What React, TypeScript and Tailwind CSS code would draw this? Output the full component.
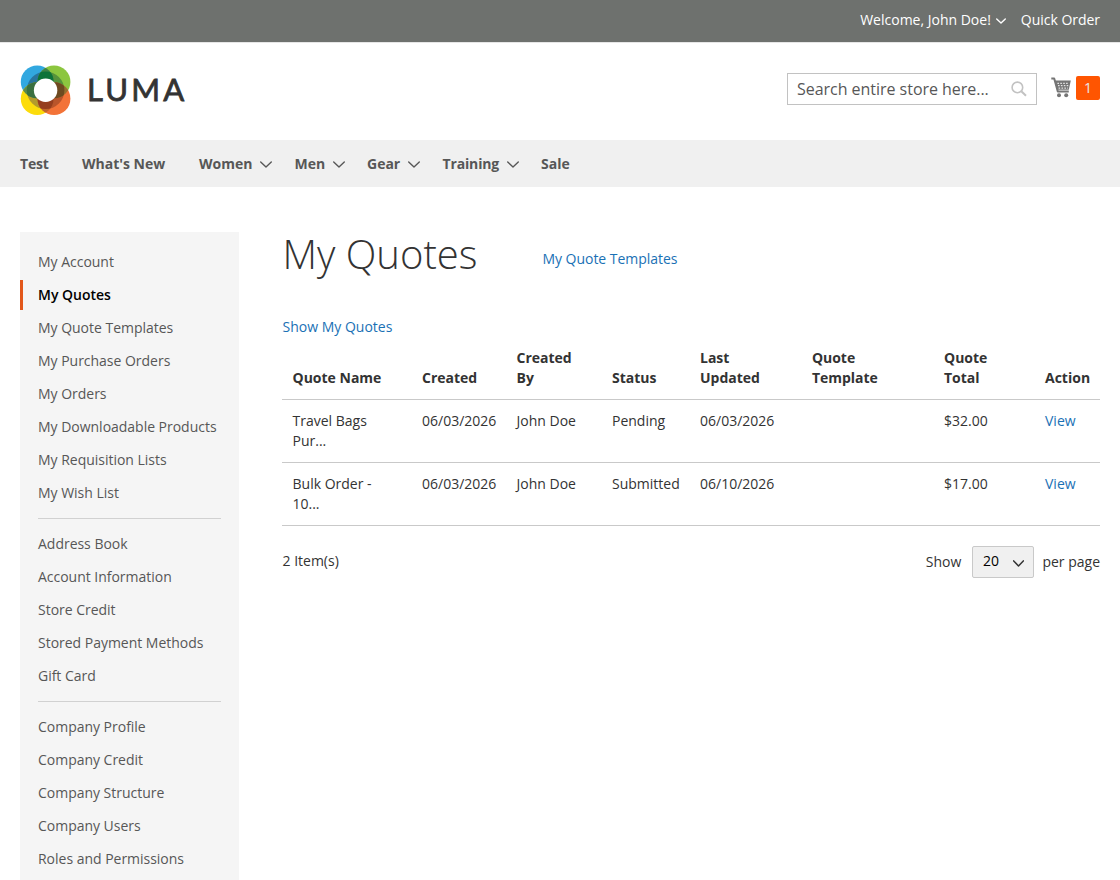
import { Fragment } from 'react'

interface ChevronProps {
  className?: string
  width: number
  height: number
  strokeWidth?: number
}

interface NavItem {
  label: string
  className: string
  hasMenu?: boolean
}

interface Quote {
  name: string
  created: string
  createdBy: string
  status: string
  updated: string
  template: string
  total: string
}

const NAV_ITEMS: NavItem[] = [
  { label: 'Test', className: 'w-[62px] tracking-[-0.2px]' },
  { label: "What's New", className: 'w-[117px]' },
  { label: 'Women', className: 'w-[95.5px]', hasMenu: true },
  { label: 'Men', className: 'w-[72.5px]', hasMenu: true },
  { label: 'Gear', className: 'w-[75.5px]', hasMenu: true },
  { label: 'Training', className: 'w-[98.5px] tracking-[-0.15px]', hasMenu: true },
  { label: 'Sale', className: 'w-[40px]' },
]

const SIDEBAR_GROUPS = [
  [
    'My Account',
    'My Quotes',
    'My Quote Templates',
    'My Purchase Orders',
    'My Orders',
    'My Downloadable Products',
    'My Requisition Lists',
    'My Wish List',
  ],
  ['Address Book', 'Account Information', 'Store Credit', 'Stored Payment Methods', 'Gift Card'],
  ['Company Profile', 'Company Credit', 'Company Structure', 'Company Users', 'Roles and Permissions'],
]

const COLUMNS = [
  { label: 'Quote Name', className: 'w-[130px]' },
  { label: 'Created', className: 'w-[94px]' },
  { label: 'Created By', className: 'w-[96px]' },
  { label: 'Status', className: 'w-[88px]' },
  { label: 'Last Updated', className: 'w-[112px]' },
  { label: 'Quote Template', className: 'w-[132px] tracking-[-0.05px]' },
  { label: 'Quote Total', className: 'w-[101px]' },
  { label: 'Action', className: 'w-[65px]' },
]

const QUOTES: Quote[] = [
  {
    name: 'Travel Bags Pur...',
    created: '06/03/2026',
    createdBy: 'John Doe',
    status: 'Pending',
    updated: '06/03/2026',
    template: '',
    total: '$32.00',
  },
  {
    name: 'Bulk Order - 10...',
    created: '06/03/2026',
    createdBy: 'John Doe',
    status: 'Submitted',
    updated: '06/10/2026',
    template: '',
    total: '$17.00',
  },
]

function Chevron({ className, width, height, strokeWidth = 1.4 }: ChevronProps) {
  return (
    <svg className={className} width={width} height={height} viewBox={`0 0 ${width} ${height}`} fill="none">
      <path
        d={`M0.7 0.9 L${width / 2} ${height - 1.1} L${width - 0.7} 0.9`}
        stroke="currentColor"
        strokeWidth={strokeWidth}
        strokeLinecap="round"
        strokeLinejoin="round"
      />
    </svg>
  )
}

function Logo() {
  return (
    <div className="flex items-center">
      <svg width="52" height="52" viewBox="0 0 52 52">
        <circle cx="17.2" cy="16.9" r="16.4" fill="#32a8e0" />
        <circle cx="34" cy="16.9" r="16.4" fill="#8cc63f" />
        <circle cx="17.2" cy="33.7" r="16.4" fill="#fcdc0b" />
        <circle cx="34" cy="33.7" r="16.4" fill="#f37338" />
        <clipPath id="blue"><circle cx="17.2" cy="16.9" r="16.4" /></clipPath>
        <clipPath id="green"><circle cx="34" cy="16.9" r="16.4" /></clipPath>
        <clipPath id="yellow"><circle cx="17.2" cy="33.7" r="16.4" /></clipPath>
        <clipPath id="orange"><circle cx="34" cy="33.7" r="16.4" /></clipPath>
        {/* Darker ring, one tint for each petal */}
        <circle cx="25.6" cy="25.3" r="18.8" fill="#28759f" clipPath="url(#blue)" />
        <circle cx="25.6" cy="25.3" r="18.8" fill="#56923b" clipPath="url(#green)" />
        <circle cx="25.6" cy="25.3" r="18.8" fill="#b39b2c" clipPath="url(#yellow)" />
        <circle cx="25.6" cy="25.3" r="18.8" fill="#b9552b" clipPath="url(#orange)" />
        {/* Overlaps of neighbouring petals */}
        <g clipPath="url(#blue)">
          <circle cx="34" cy="16.9" r="16.4" fill="#3f8247" />
          <circle cx="17.2" cy="33.7" r="16.4" fill="#5b8a4a" />
        </g>
        <g clipPath="url(#orange)">
          <circle cx="34" cy="16.9" r="16.4" fill="#96702f" />
          <circle cx="17.2" cy="33.7" r="16.4" fill="#c0672c" />
        </g>
        {/* The overlaps get darker again inside the ring */}
        <g clipPath="url(#blue)">
          <g clipPath="url(#green)">
            <circle cx="25.6" cy="25.3" r="18.8" fill="#0d7339" />
          </g>
          <g clipPath="url(#yellow)">
            <circle cx="25.6" cy="25.3" r="18.8" fill="#3a7040" />
          </g>
        </g>
        <g clipPath="url(#orange)">
          <g clipPath="url(#green)">
            <circle cx="25.6" cy="25.3" r="18.8" fill="#6d4a20" />
          </g>
          <g clipPath="url(#yellow)">
            <circle cx="25.6" cy="25.3" r="18.8" fill="#963e1f" />
          </g>
        </g>
        <circle cx="25.6" cy="25.3" r="11.7" fill="#fff" />
      </svg>
      <span className="ml-[15px] pb-[3px] font-['Lato',sans-serif] text-[31px] leading-[49px] tracking-[3.2px] text-[#333] [-webkit-text-stroke:0.8px_#333]">
        LUMA
      </span>
    </div>
  )
}

function SearchIcon() {
  return (
    <svg width="16" height="16" viewBox="0 0 16 16" fill="none" stroke="#c2c2c2">
      <circle cx="6.4" cy="6.4" r="5.3" strokeWidth="1.6" />
      <path d="M10.3 10.3 L15 14.8" strokeWidth="2" />
    </svg>
  )
}

function CartIcon() {
  return (
    <svg width="20" height="21" viewBox="0 0 20 21" fill="none" stroke="#757575">
      <path d="M0.3 1.4 H3.2 L6.8 14.6 H17.8" strokeWidth="2" strokeLinejoin="round" />
      <path d="M3.4 3.6 H19.8 L17.8 12.8 H6.2 Z" fill="#757575" stroke="none" />
      <path
        d="M6.4 6.3 H18 M7 8.7 H17.6 M7.6 11.1 H17"
        stroke="#fff"
        strokeWidth="1"
        strokeDasharray="1.6 1.3"
      />
      <circle cx="8" cy="18.3" r="2" fill="#757575" stroke="none" />
      <circle cx="15.2" cy="18.3" r="2" fill="#757575" stroke="none" />
    </svg>
  )
}

function Header() {
  return (
    <header>
      <div className="flex h-[43px] items-center justify-end border-b border-[#e6e6e6] bg-[#6e716e] px-5 pb-[3px] text-white">
        <span>Welcome, John Doe!</span>
        <Chevron className="mt-[2px] ml-[5px]" width={10} height={6} />
        <a className="ml-[15px] tracking-[-0.03px]">Quick Order</a>
      </div>
      <div className="flex h-[97px] items-start justify-between px-5">
        <div className="pt-[22px]">
          <Logo />
        </div>
        <div className="flex pt-[30px]">
          <div className="flex h-8 w-[250px] items-center justify-between border border-[#c2c2c2] pr-[9px] pl-[9px]">
            <span className="text-base tracking-[-0.03px] text-[#575757]">Search entire store here...</span>
            <SearchIcon />
          </div>
          <div className="ml-[14px] pt-1">
            <CartIcon />
          </div>
          <span className="mt-[3px] ml-[5px] h-6 w-6 rounded-[2px] bg-[#ff5501] text-center leading-6 text-[#e8e8e8]">
            1
          </span>
        </div>
      </div>
    </header>
  )
}

function NavBar() {
  return (
    <nav className="flex h-[47px] items-center bg-[#f0f0f0] px-5 font-bold text-[#575757]">
      {NAV_ITEMS.map((item) => (
        <a key={item.label} className={`flex shrink-0 items-center ${item.className}`}>
          {item.label}
          {item.hasMenu && <Chevron className="mt-[2px] ml-[8px]" width={12} height={7} />}
        </a>
      ))}
    </nav>
  )
}

function Sidebar() {
  return (
    <aside className="w-[219px] shrink-0 bg-[#f5f5f5] pt-[15px] pb-5">
      {SIDEBAR_GROUPS.map((group, i) => (
        <Fragment key={group[0]}>
          {i > 0 && <hr className="mx-[18px] mt-[10px] mb-[10px] border-[#d1d1d1]" />}
          <ul>
            {group.map((label) => (
              <li
                key={label}
                className={`mb-[3px] h-[30px] border-l-[3px] pl-[15px] leading-[30px] ${
                  label === 'My Quotes'
                    ? 'border-[#e2571a] font-semibold text-black'
                    : 'border-transparent tracking-[-0.02px] text-[#575757]'
                }`}
              >
                {label}
              </li>
            ))}
          </ul>
        </Fragment>
      ))}
    </aside>
  )
}

function QuotesTable() {
  return (
    <table className="w-[818px] table-fixed border-collapse text-left">
      <thead>
        <tr className="border-b border-[#c9c9c9]">
          {COLUMNS.map((col) => (
            <th
              key={col.label}
              className={`px-[10px] py-[11px] align-bottom font-bold nth-[-2n+3]:pl-[10.5px] ${col.className}`}
            >
              {col.label}
            </th>
          ))}
        </tr>
      </thead>
      <tbody className="[&_td]:px-[10px] [&_td]:py-[11px] [&_td:nth-child(-2n+3)]:pl-[10.5px]">
        {QUOTES.map((quote) => (
          <tr key={quote.name} className="h-[63px] border-b border-[#c9c9c9] align-top">
            <td>
              <div className="w-[85px]">{quote.name}</div>
            </td>
            <td>{quote.created}</td>
            <td>{quote.createdBy}</td>
            <td>{quote.status}</td>
            <td>{quote.updated}</td>
            <td>{quote.template}</td>
            <td>{quote.total}</td>
            <td>
              <a className="text-[#1a71b5]">View</a>
            </td>
          </tr>
        ))}
      </tbody>
    </table>
  )
}

function Toolbar() {
  return (
    <div className="flex items-start justify-between pt-5">
      <p className="pt-[5px] pl-[0.5px]">2 Item(s)</p>
      <div className="flex items-center">
        <span>Show</span>
        <button className="mr-[8px] ml-[11px] flex h-8 w-[62px] items-center justify-between rounded-[2px] border border-[#c9c9c9] bg-[#f0f0f0] pr-[9px] pb-[2px] pl-[9.5px] text-black">
          20
          <Chevron className="mt-1 text-[#333]" width={11} height={7} strokeWidth={1.5} />
        </button>
        <span>per page</span>
      </div>
    </div>
  )
}

export default function App() {
  return (
    <div className="h-[880px] w-[1120px] overflow-hidden bg-white font-['Open_Sans',sans-serif] text-sm leading-5 text-[#333]">
      <Header />
      <NavBar />
      <div className="flex items-start px-5 pt-[45px]">
        <Sidebar />
        <main className="ml-[43px] w-[818px]">
          <div className="flex pl-[0.5px]">
            <h1 className="w-[260px] text-[40px] leading-[44px] font-light">My Quotes</h1>
            <a className="pt-[17px] tracking-[-0.04px] text-[#1a71b5]">My Quote Templates</a>
          </div>
          <div className="mt-[41px] flex pl-[0.5px]">
            <a className="text-[#1a71b5]">Show My Quotes</a>
          </div>
          <QuotesTable />
          <Toolbar />
        </main>
      </div>
    </div>
  )
}
